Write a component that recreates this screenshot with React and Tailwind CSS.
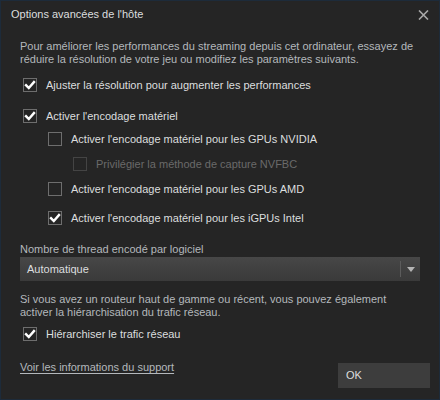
import React, { useState } from 'react';

function Check({ checked, disabled }) {
  return (
    <span
      className={`flex items-center justify-center w-[14px] h-[14px] border shrink-0 ${
        disabled ? 'border-[#444444]' : 'border-[#6e6e6e]'
      }`}
    >
      {checked && (
        <svg width="12" height="12" viewBox="0 0 12 12">
          <path d="M2 6.2 L4.8 9 L10 3" fill="none" stroke="#ffffff" strokeWidth="2.4" strokeLinecap="square" />
        </svg>
      )}
    </span>
  );
}

function Option({ label, checked, disabled, onToggle, className = '' }) {
  return (
    <div
      className={`flex items-center gap-[9px] h-[14px] cursor-default ${className}`}
      onClick={disabled ? undefined : onToggle}
    >
      <Check checked={checked} disabled={disabled} />
      <span className={disabled ? 'text-[#6a6a6a]' : 'text-[#dcdedf]'}>{label}</span>
    </div>
  );
}

export default function App() {
  const [opts, setOpts] = useState({
    resolution: true,
    hw: true,
    nvidia: false,
    nvfbc: false,
    amd: false,
    intel: true,
    qos: true,
  });
  const toggle = (k) => setOpts((o) => ({ ...o, [k]: !o[k] }));

  return (
    <div
      className="w-[440px] h-[400px] bg-[#252525] border border-[#1d2b3a] text-[11px] leading-[13px]"
      style={{ fontFamily: '"Liberation Sans", Arial, sans-serif' }}
    >
      <div className="h-[30px] flex items-start justify-between pl-[10px] pr-[10px] pt-[6px]">
        <span className="text-[#dcdedf] text-[11px] leading-[14px]">Options avancées de l'hôte</span>
        <svg width="11" height="10" viewBox="0 0 11 10" className="mt-[3px]">
          <path d="M1 0.5 L10 9.5 M10 0.5 L1 9.5" stroke="#a8a8a8" strokeWidth="1.6" />
        </svg>
      </div>

      <div className="pl-[19px] pr-[19px]">
        <p className="mt-[9px] text-[#b4b8bc]">
          Pour améliorer les performances du streaming depuis cet ordinateur, essayez de réduire la résolution de votre jeu ou modifiez les paramètres suivants.
        </p>

        <Option className="mt-[12px] ml-[3px]" label="Ajuster la résolution pour augmenter les performances" checked={opts.resolution} onToggle={() => toggle('resolution')} />
        <Option className="mt-[17px] ml-[3px]" label="Activer l'encodage matériel" checked={opts.hw} onToggle={() => toggle('hw')} />
        <Option className="mt-[9px] ml-[28px]" label="Activer l'encodage matériel pour les GPUs NVIDIA" checked={opts.nvidia} onToggle={() => toggle('nvidia')} />
        <Option className="mt-[11px] ml-[53px]" label="Privilégier la méthode de capture NVFBC" checked={opts.nvfbc} disabled />
        <Option className="mt-[11px] ml-[28px]" label="Activer l'encodage matériel pour les GPUs AMD" checked={opts.amd} onToggle={() => toggle('amd')} />
        <Option className="mt-[15px] ml-[28px]" label="Activer l'encodage matériel pour les iGPUs Intel" checked={opts.intel} onToggle={() => toggle('intel')} />

        <div className="mt-[18px] text-[#b4b8bc]">Nombre de thread encodé par logiciel</div>
        <div className="mt-[1px] h-[24px] flex items-center bg-gradient-to-b from-[#474747] to-[#3a3a3a]">
          <span className="flex-1 pl-[7px] text-[#dcdedf]">Automatique</span>
          <span className="w-px h-[16px] bg-[#5c5c5c]"></span>
          <span className="w-[19px] flex justify-center">
            <svg width="8" height="5" viewBox="0 0 8 5">
              <path d="M0 0 L8 0 L4 5 Z" fill="#b4b4b4" />
            </svg>
          </span>
        </div>

        <p className="mt-[12px] text-[#b4b8bc]">
          Si vous avez un routeur haut de gamme ou récent, vous pouvez également activer la hiérarchisation du trafic réseau.
        </p>

        <Option className="mt-[8px] ml-[3px]" label="Hiérarchiser le trafic réseau" checked={opts.qos} onToggle={() => toggle('qos')} />

        <div className="mt-[20px] flex items-start justify-between">
          <a href="#" className="text-[#b4b8bc] underline underline-offset-2">Voir les informations du support</a>
          <button className="mt-[2px] mr-[-10px] w-[92px] h-[25px] bg-[#3d3d3d] text-left pl-[8px] text-[#dcdedf]">OK</button>
        </div>
      </div>
    </div>
  );
}
